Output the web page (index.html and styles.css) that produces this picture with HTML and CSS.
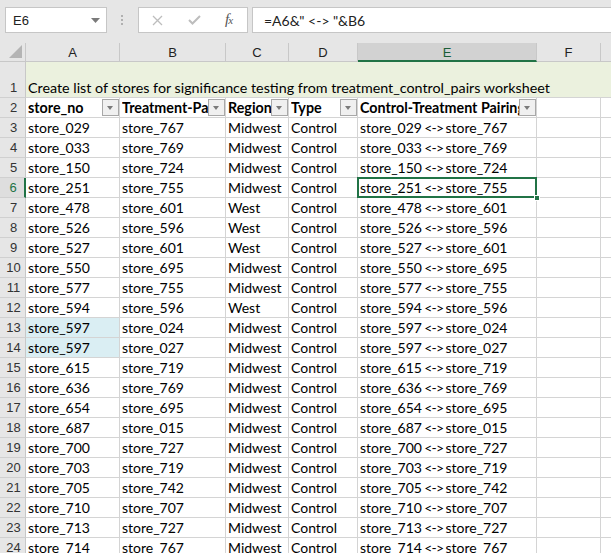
FILE: index.html
```html
<!DOCTYPE html>
<html>
<head>
<meta charset="utf-8">
<link rel="stylesheet" href="styles.css">
</head>
<body>
<div class="app">
  <div class="toolbar">
    <div class="namebox">
      <span class="name">E6</span>
      <svg class="nb-arrow" width="9" height="5" viewBox="0 0 9 5"><path d="M0 0H9L4.5 5Z" fill="#7a7a7a"/></svg>
    </div>
    <div class="dots">
      <svg width="3" height="11" viewBox="0 0 3 11"><rect x="0" y="0" width="2" height="2" fill="#b0b0b0"/><rect x="0" y="4" width="2" height="2" fill="#b0b0b0"/><rect x="0" y="8" width="2" height="2" fill="#b0b0b0"/></svg>
    </div>
    <div class="fbtns">
      <svg class="fb-x" width="11" height="11" viewBox="0 0 11 11"><path d="M1 1L10 10M10 1L1 10" stroke="#bdbdbd" stroke-width="1.3"/></svg>
      <svg class="fb-check" width="13" height="10" viewBox="0 0 13 10"><path d="M1 5L4.5 8.5L12 1" stroke="#bdbdbd" stroke-width="2" fill="none"/></svg>
      <span class="fx"><i>f</i><i class="x">x</i></span>
    </div>
    <div class="formula">=A6&amp;" &lt;-&gt; "&amp;B6</div>
  </div>

  <div class="sheet">
    <div class="corner"><svg width="13" height="13" viewBox="0 0 13 13"><path d="M13 0V13H0Z" fill="#b4b4b4"/></svg></div>
    <div class="colh">A</div>
    <div class="colh">B</div>
    <div class="colh">C</div>
    <div class="colh">D</div>
    <div class="colh sel">E</div>
    <div class="colh">F</div>
    <div class="colh last"></div>

    <div class="rowh r1">1</div>
    <div class="title">Create list of stores for significance testing from treatment_control_pairs worksheet</div>

    <div class="rowh">2</div>
    <div class="c hd"><span class="t">store_no</span><span class="flt"></span></div>
    <div class="c hd"><span class="t">Treatment-Pair</span><span class="flt"></span></div>
    <div class="c hd"><span class="t">Region</span><span class="flt"></span></div>
    <div class="c hd"><span class="t">Type</span><span class="flt"></span></div>
    <div class="c hd"><span class="t">Control-Treatment Pairing</span><span class="flt"></span></div>
    <div class="c"></div>
    <div class="c last"></div>

    <div class="rowh">3</div><div class="c">store_029</div><div class="c">store_767</div><div class="c">Midwest</div><div class="c">Control</div><div class="c">store_029<span class="ar"> &lt;-&gt; </span>store_767</div><div class="c"></div><div class="c last"></div>
    <div class="rowh">4</div><div class="c">store_033</div><div class="c">store_769</div><div class="c">Midwest</div><div class="c">Control</div><div class="c">store_033<span class="ar"> &lt;-&gt; </span>store_769</div><div class="c"></div><div class="c last"></div>
    <div class="rowh">5</div><div class="c">store_150</div><div class="c">store_724</div><div class="c">Midwest</div><div class="c">Control</div><div class="c">store_150<span class="ar"> &lt;-&gt; </span>store_724</div><div class="c"></div><div class="c last"></div>
    <div class="rowh sel">6</div><div class="c">store_251</div><div class="c">store_755</div><div class="c">Midwest</div><div class="c">Control</div><div class="c active">store_251<span class="ar"> &lt;-&gt; </span>store_755<span class="selbox"></span><span class="handle"></span></div><div class="c"></div><div class="c last"></div>
    <div class="rowh">7</div><div class="c">store_478</div><div class="c">store_601</div><div class="c">West</div><div class="c">Control</div><div class="c">store_478<span class="ar"> &lt;-&gt; </span>store_601</div><div class="c"></div><div class="c last"></div>
    <div class="rowh">8</div><div class="c">store_526</div><div class="c">store_596</div><div class="c">West</div><div class="c">Control</div><div class="c">store_526<span class="ar"> &lt;-&gt; </span>store_596</div><div class="c"></div><div class="c last"></div>
    <div class="rowh">9</div><div class="c">store_527</div><div class="c">store_601</div><div class="c">West</div><div class="c">Control</div><div class="c">store_527<span class="ar"> &lt;-&gt; </span>store_601</div><div class="c"></div><div class="c last"></div>
    <div class="rowh">10</div><div class="c">store_550</div><div class="c">store_695</div><div class="c">Midwest</div><div class="c">Control</div><div class="c">store_550<span class="ar"> &lt;-&gt; </span>store_695</div><div class="c"></div><div class="c last"></div>
    <div class="rowh">11</div><div class="c">store_577</div><div class="c">store_755</div><div class="c">Midwest</div><div class="c">Control</div><div class="c">store_577<span class="ar"> &lt;-&gt; </span>store_755</div><div class="c"></div><div class="c last"></div>
    <div class="rowh">12</div><div class="c">store_594</div><div class="c">store_596</div><div class="c">West</div><div class="c">Control</div><div class="c">store_594<span class="ar"> &lt;-&gt; </span>store_596</div><div class="c"></div><div class="c last"></div>
    <div class="rowh">13</div><div class="c dup">store_597</div><div class="c">store_024</div><div class="c">Midwest</div><div class="c">Control</div><div class="c">store_597<span class="ar"> &lt;-&gt; </span>store_024</div><div class="c"></div><div class="c last"></div>
    <div class="rowh">14</div><div class="c dup">store_597</div><div class="c">store_027</div><div class="c">Midwest</div><div class="c">Control</div><div class="c">store_597<span class="ar"> &lt;-&gt; </span>store_027</div><div class="c"></div><div class="c last"></div>
    <div class="rowh">15</div><div class="c">store_615</div><div class="c">store_719</div><div class="c">Midwest</div><div class="c">Control</div><div class="c">store_615<span class="ar"> &lt;-&gt; </span>store_719</div><div class="c"></div><div class="c last"></div>
    <div class="rowh">16</div><div class="c">store_636</div><div class="c">store_769</div><div class="c">Midwest</div><div class="c">Control</div><div class="c">store_636<span class="ar"> &lt;-&gt; </span>store_769</div><div class="c"></div><div class="c last"></div>
    <div class="rowh">17</div><div class="c">store_654</div><div class="c">store_695</div><div class="c">Midwest</div><div class="c">Control</div><div class="c">store_654<span class="ar"> &lt;-&gt; </span>store_695</div><div class="c"></div><div class="c last"></div>
    <div class="rowh">18</div><div class="c">store_687</div><div class="c">store_015</div><div class="c">Midwest</div><div class="c">Control</div><div class="c">store_687<span class="ar"> &lt;-&gt; </span>store_015</div><div class="c"></div><div class="c last"></div>
    <div class="rowh">19</div><div class="c">store_700</div><div class="c">store_727</div><div class="c">Midwest</div><div class="c">Control</div><div class="c">store_700<span class="ar"> &lt;-&gt; </span>store_727</div><div class="c"></div><div class="c last"></div>
    <div class="rowh">20</div><div class="c">store_703</div><div class="c">store_719</div><div class="c">Midwest</div><div class="c">Control</div><div class="c">store_703<span class="ar"> &lt;-&gt; </span>store_719</div><div class="c"></div><div class="c last"></div>
    <div class="rowh">21</div><div class="c">store_705</div><div class="c">store_742</div><div class="c">Midwest</div><div class="c">Control</div><div class="c">store_705<span class="ar"> &lt;-&gt; </span>store_742</div><div class="c"></div><div class="c last"></div>
    <div class="rowh">22</div><div class="c">store_710</div><div class="c">store_707</div><div class="c">Midwest</div><div class="c">Control</div><div class="c">store_710<span class="ar"> &lt;-&gt; </span>store_707</div><div class="c"></div><div class="c last"></div>
    <div class="rowh">23</div><div class="c">store_713</div><div class="c">store_727</div><div class="c">Midwest</div><div class="c">Control</div><div class="c">store_713<span class="ar"> &lt;-&gt; </span>store_727</div><div class="c"></div><div class="c last"></div>
    <div class="rowh">24</div><div class="c">store_714</div><div class="c">store_767</div><div class="c">Midwest</div><div class="c">Control</div><div class="c">store_714<span class="ar"> &lt;-&gt; </span>store_767</div><div class="c"></div><div class="c last"></div>
  </div>
</div>
</body>
</html>
```

FILE: styles.css
```css
* { box-sizing: border-box; }
html, body { margin: 0; padding: 0; }
body {
  width: 611px;
  height: 553px;
  overflow: hidden;
  background: #ffffff;
  font-family: Lato, "Liberation Sans", sans-serif;
}
.app { width: 611px; }

.toolbar {
  height: 43px;
  background: #e6e6e6;
  display: flex;
  align-items: flex-start;
  padding-top: 7px;
  padding-left: 5px;
}
.namebox {
  width: 102px;
  height: 26px;
  background: #fff;
  border: 1px solid #c6c6c6;
  display: flex;
  align-items: center;
  justify-content: space-between;
  padding: 0 6px 0 7px;
  font-family: "Liberation Sans", Arial, sans-serif;
  font-size: 13px;
  color: #222;
}
.nb-arrow { margin-top: 1px; }
.dots {
  width: 31px;
  height: 26px;
  display: flex;
  align-items: center;
  justify-content: center;
}
.fbtns {
  width: 110px;
  height: 26px;
  background: #fff;
  border: 1px solid #c6c6c6;
  display: flex;
  align-items: center;
  padding-left: 13px;
}
.fb-x { margin-right: 25px; }
.fb-check { margin-right: 24px; }
.fx {
  font-family: "Liberation Serif", serif;
  font-style: italic;
  font-size: 15px;
  color: #555;
  letter-spacing: -1px;
  margin-top: -1px;
}
.fx i { font-style: italic; }
.fx .x { font-size: 11px; }
.formula {
  flex: 1;
  height: 26px;
  margin-left: 4px;
  background: #fff;
  border: 1px solid #c6c6c6;
  border-right: none;
  padding-left: 11px;
  display: flex;
  align-items: center;
  font-family: Lato, "Liberation Sans", sans-serif;
  font-size: 14px;
  color: #222;
  white-space: pre;
}

.sheet {
  display: grid;
  grid-template-columns: 26px 94px 106px 63px 69px 179px 64px 10px;
  grid-template-rows: 19px 36px repeat(23, 20px);
}
.corner {
  background: #e6e6e6;
  border-right: 1px solid #c8c8c8;
  border-bottom: 1px solid #c8c8c8;
  display: flex;
  align-items: flex-end;
  justify-content: flex-end;
  padding: 0 3px 3px 0;
}
.colh {
  background: #e6e6e6;
  border-right: 1px solid #c8c8c8;
  border-bottom: 1px solid #c8c8c8;
  display: flex;
  align-items: center;
  justify-content: center;
  font-family: "Liberation Sans", Arial, sans-serif;
  font-size: 13px;
  color: #222;
  padding-top: 1px;
}
.colh.sel {
  background: #d2d2d2;
  border-bottom: 2px solid #217346;
  color: #1b5e38;
}
.colh.last { border-right: none; }

.rowh {
  background: #e6e6e6;
  border-right: 1px solid #c8c8c8;
  border-bottom: 1px solid #d0d0d0;
  display: flex;
  align-items: center;
  justify-content: center;
  font-family: "Liberation Sans", Arial, sans-serif;
  font-size: 13px;
  color: #333;
  padding-left: 2px;
}
.rowh.r1 { align-items: flex-end; padding-bottom: 2px; }
.rowh.sel {
  background: #dedede;
  border-right: 2px solid #217346;
  color: #217346;
}

.title {
  grid-column: 2 / 9;
  background: #ebf1de;
  border-bottom: 1px solid #d4d4d4;
  display: flex;
  align-items: flex-end;
  padding: 0 0 1px 2px;
  font-size: 14.3px;
  color: #000;
  white-space: nowrap;
  overflow: hidden;
}

.c {
  position: relative;
  border-right: 1px solid #d4d4d4;
  border-bottom: 1px solid #d4d4d4;
  padding: 0 0 0 2px;
  display: flex;
  align-items: center;
  font-size: 14px;
  color: #000;
  white-space: pre;
  overflow: hidden;
}
.c .ar { letter-spacing: -0.9px; word-spacing: -0.3px; }
.c.last { border-right: none; }
.c.dup { background: #daeef3; }
.c.hd { font-weight: bold; padding-right: 0; font-size: 14.3px; }
.c.hd .t {
  flex: 1;
  min-width: 0;
  overflow: hidden;
  white-space: nowrap;
}
.flt {
  flex: none;
  width: 17px;
  height: 17px;
  border: 1px solid #a8a8a8;
  background: #f0f0f0;
  position: relative;
  margin-top: -1px;
}
.flt::after {
  content: "";
  position: absolute;
  left: 4px;
  top: 6px;
  border-left: 3.5px solid transparent;
  border-right: 3.5px solid transparent;
  border-top: 4px solid #7a7a7a;
}
.c.active { overflow: visible; }
.selbox {
  position: absolute;
  left: -1px;
  top: -1px;
  right: -1px;
  bottom: -1px;
  border: 2px solid #217346;
  pointer-events: none;
}
.handle {
  position: absolute;
  right: -4px;
  bottom: -4px;
  width: 6px;
  height: 6px;
  background: #217346;
  border: 1px solid #fff;
  z-index: 2;
}
```
